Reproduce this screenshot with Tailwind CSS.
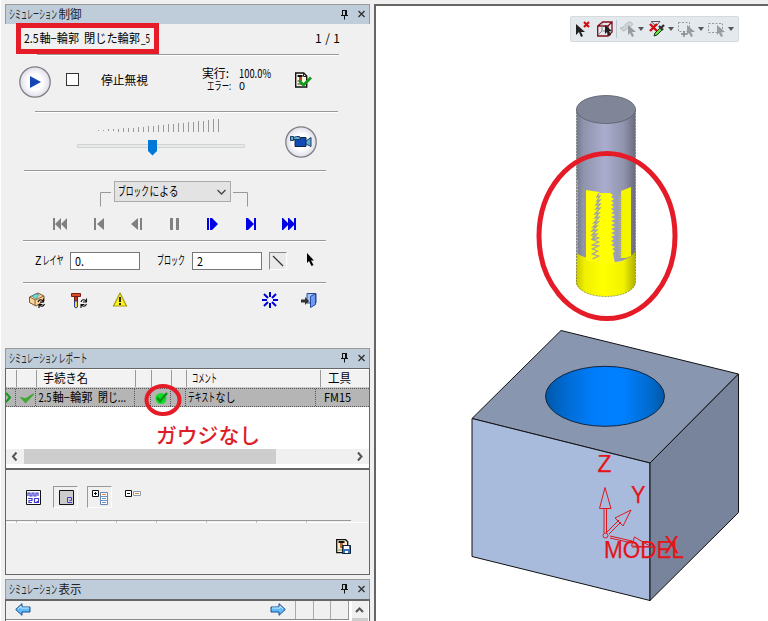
<!DOCTYPE html>
<html lang="ja">
<head>
<meta charset="utf-8">
<title>シミュレーション</title>
<script src="https://cdn.jsdelivr.net/npm/@tailwindcss/browser@4"></script>
</head>
<body class="relative flex h-[621px] w-[768px] overflow-hidden bg-[#f0f0f0] font-['Noto_Sans_CJK_JP','Liberation_Sans',sans-serif] text-[12px] text-black [&_svg]:block [&_svg]:shrink-0 [&_svg]:overflow-visible">

<!-- Left docked panels -->
<aside class="flex h-full w-[374px] shrink-0 flex-col border-l border-white pl-[4px] pt-[4px]">

  <!-- Simulation control -->
  <section class="flex h-[344px] w-[365px] shrink-0 flex-col">
    <header class="flex h-[20px] shrink-0 items-start border border-b-0 border-[#999] bg-[#bfccda] pl-[3px]">
      <svg width="74" height="19" fill="#222"><text y="14" textLength="48" lengthAdjust="spacingAndGlyphs">シミュレーション</text><text x="49.500" y="14" textLength="23" lengthAdjust="spacingAndGlyphs">制御</text></svg>
      <svg class="ml-auto mr-px" width="30" height="19"><path d="M4.500 5v5M3 10.500h7M6.500 11v3.500M4 5.500h5" stroke="#111" fill="none"/><path d="M8 5v5" stroke="#111" stroke-width="2"/><path d="M20.500 6l6 6M26.500 6l-6 6" stroke="#333" stroke-width="1.400"/></svg>
    </header>
    <div class="flex h-[30px] shrink-0 items-start pl-[19px]">
      <svg width="126" height="30"><text y="19" textLength="14.500" lengthAdjust="spacingAndGlyphs">2.5</text><text x="15.500" y="19" textLength="39.500" lengthAdjust="spacingAndGlyphs">軸−輪郭</text><text x="60" y="19" textLength="56" lengthAdjust="spacingAndGlyphs">閉じた輪郭</text><text x="117" y="19" textLength="9" lengthAdjust="spacingAndGlyphs">_5</text></svg>
      <svg class="ml-[165px]" width="26" height="30"><text y="19" textLength="25" lengthAdjust="spacing">1 / 1</text></svg>
    </div>
    <div class="ml-[32px] h-px w-[302px] shrink-0 bg-[#999] shadow-[0_1px_0_#fff]"></div>
    <div class="flex h-[56px] shrink-0 items-start pl-[14px]">
      <svg class="mt-[11px]" width="32" height="32"><defs><radialGradient id="disc"><stop offset=".5" stop-color="#fff"/><stop offset="1" stop-color="#dddde8"/></radialGradient></defs><circle cx="16" cy="16" r="15.200" fill="url(#disc)" stroke="#827d85" stroke-width="1.300"/><path d="M11 10v12l11-6z" fill="#1746b4"/></svg>
      <span class="ml-[15px] mt-[18px] size-[13px] border border-[#333] bg-white"></span>
      <svg class="ml-[22px]" width="48" height="50"><text y="29.500" textLength="47" lengthAdjust="spacingAndGlyphs">停止無視</text></svg>
      <svg class="ml-[53px]" width="72" height="50"><text y="23" textLength="27" lengthAdjust="spacingAndGlyphs">実行:</text><text x="37" y="23" textLength="32" lengthAdjust="spacingAndGlyphs">100.0%</text><text x="5" y="35" font-size="11" textLength="24" lengthAdjust="spacingAndGlyphs">エラー:</text><text x="37" y="35" font-size="11" textLength="6" lengthAdjust="spacingAndGlyphs">0</text></svg>
      <svg class="ml-[21px] mt-[17px]" width="17" height="17"><path d="M.7 1h8l3 3v11H.7z" fill="#fffbe8" stroke="#111" stroke-width="1.400"/><path d="M8.500 1v3.500h3M2.500 9h3M2.500 12h5" stroke="#222" fill="none"/><path d="M2.500 3h5v2h-5z" fill="#111"/><path d="M4 5h3v4H4z" fill="#b94b16"/><path d="M4.500 9l4 4 7.500-7.500" stroke="#12991c" stroke-width="2.800" fill="none"/></svg>
    </div>
    <div class="ml-[30px] h-px w-[303px] shrink-0 bg-[#999] shadow-[0_1px_0_#fff]"></div>
    <div class="flex h-[58px] shrink-0 items-start pl-[72px]">
      <svg width="168" height="50"><path d="M21.500 18v1M26.500 18v1M31.500 17v2M36.500 17v2M41.500 17v3M46.500 16v4M51.500 16v4M56.500 16v4M61.500 15v5M66.500 15v5M71.500 14v6M76.500 14v6M81.500 13v7M86.500 13v7M91.500 12v8M96.500 12v8M101.500 11v9M106.500 11v9M111.500 10v10M116.500 10v10M121.500 9v11M126.500 9v11M131.500 8v12M136.500 7v13M141.500 7v13" stroke="#999"/><path d="M.5 32.500h167v3H.5z" fill="#e7eaea" stroke="#d2d2d2"/><path d="M71 28h9v11l-4.500 4.500-4.500-4.500z" fill="#0078d7"/></svg>
      <svg class="ml-[40px] mt-[14px]" width="32" height="32"><circle cx="16" cy="16" r="15.200" fill="url(#disc)" stroke="#827d85" stroke-width="1.300"/><path d="M10 11.500h11v9H10z" fill="#104bb5" stroke="#12264d"/><path d="M5.500 10.500h3v4h-3zM8.500 11.500l3-1h3l1 3h-7zM21 15l5-3.500v9L21 18z" fill="#61a9cf" stroke="#183d61"/></svg>
    </div>
    <div class="ml-[19px] h-px w-[302px] shrink-0 bg-[#999] shadow-[0_1px_0_#fff]"></div>
    <div class="flex h-[40px] shrink-0 items-start pl-[95px]">
      <svg width="11" height="38"><path d="M.5 35.500v-14H11" stroke="#999" fill="none"/></svg>
      <div class="ml-[3px] mt-[10px] flex h-[21px] w-[117px] border border-[#aaa] bg-[#e3e3e3] pl-[3px]"><svg width="112" height="18"><text y="14" textLength="31" lengthAdjust="spacingAndGlyphs">ブロック</text><text x="31.500" y="14" textLength="29" lengthAdjust="spacingAndGlyphs">による</text><path d="M99.500 8l4 4 4-4" fill="none" stroke="#444" stroke-width="1.300"/></svg></div>
      <svg class="ml-[2px]" width="16" height="38"><path d="M0 21.500h14.500v14" stroke="#999" fill="none"/></svg>
    </div>
    <div class="flex h-[29px] shrink-0 items-start pl-[47px] pt-[7px]">
      <svg width="16" height="12" fill="#808080"><path d="M1 0h2v12H1zM9 0v12L3 6zM15 0v12L9 6z"/></svg>
      <svg class="ml-[26px]" width="11" height="12" fill="#808080"><path d="M0 0h2v12H0zM10 0v12L3 6z"/></svg>
      <svg class="ml-[26px]" width="12" height="12" fill="#808080"><path d="M7 0v12L0 6zM9 0h2v12H9z"/></svg>
      <svg class="ml-[27px]" width="10" height="12" fill="#808080"><path d="M0 0h3v12H0zM6 0h3v12H6z"/></svg>
      <svg class="ml-[27px]" width="12" height="12" fill="#0000e6"><path d="M0 0h2v12H0zM3 0h2l6 6-6 6H3z"/></svg>
      <svg class="ml-[27px]" width="11" height="12" fill="#0000e6"><path d="M0 0h2l6 6-6 6H0zM8 0h2v12H8z"/></svg>
      <svg class="ml-[25px]" width="15" height="12" fill="#0000e6"><path d="M0 0h1l6 6-6 6H0zM6 0h1l6 6-6 6H6zM12 0h2v12h-2z"/></svg>
    </div>
    <div class="ml-[18px] h-px w-[303px] shrink-0 bg-[#999] shadow-[0_1px_0_#fff]"></div>
    <div class="flex h-[41px] shrink-0 items-start pl-[30px]">
      <svg width="30" height="38"><text y="23.500" textLength="6.500" lengthAdjust="spacingAndGlyphs">Z</text><text x="7.500" y="23.500" textLength="21" lengthAdjust="spacingAndGlyphs">レイヤ</text></svg>
      <div class="ml-[5px] mt-[11px] flex h-[18px] w-[70px] border border-[#777] bg-white pl-[4px]"><svg width="20" height="16"><text y="13" textLength="9" lengthAdjust="spacingAndGlyphs">0.</text></svg></div>
      <svg class="ml-[17px]" width="29" height="38"><text y="23.500" textLength="28" lengthAdjust="spacingAndGlyphs">ブロック</text></svg>
      <div class="ml-[6px] mt-[11px] flex h-[18px] w-[70px] border border-[#777] bg-white pl-[4px]"><svg width="20" height="16"><text y="13" textLength="6" lengthAdjust="spacingAndGlyphs">2</text></svg></div>
      <span class="ml-[7px] mt-[11px] h-[18px] w-[18px] border border-b-white border-l-[#888] border-r-white border-t-[#888] bg-[#eaeaea]"><svg width="16" height="16"><path d="M3 3l10 10" stroke="#333" stroke-width="1.300"/></svg></span>
      <svg class="ml-[20px] mt-[12px]" width="8" height="15"><path d="M0 0v10l2-2 2.500 5 2-1-2.500-4.500h3z"/></svg>
    </div>
    <div class="ml-[18px] h-px w-[303px] shrink-0 bg-[#999] shadow-[0_1px_0_#fff]"></div>
    <div class="flex h-[36px] shrink-0 items-start pl-[24px] pt-[9px]">
      <svg width="17" height="17"><path d="M.5 5L9 1l6 3v5l-8 5-6.500-3.500z" fill="#fbd49c" stroke="#76572f"/><path d="M1 5l5 3 9-4M6 8v6" stroke="#8a663b" fill="none"/><path d="M3 4l4-2 3 1-3 4z" fill="#70dce5" stroke="#347986" stroke-width=".6"/><path d="M9 10c1-2.500 3-3 5-1M14.500 6.500V10H11M15.500 12c-1 2.500-3 3-5 1M10 16v-3.500h3.500" fill="none" stroke="#111" stroke-width="1.200"/></svg>
      <svg class="ml-[25px] mt-px" width="17" height="17"><path d="M.5.500h9v3h-9z" fill="#dc4b2a" stroke="#782010"/><path d="M3.500 3.500h3v6h-3z" fill="#c33820" stroke="#651b12"/><path d="M3.500 8h3v6l-1.500 1-1.500-1z" fill="#f1d72d" stroke="#273e9d"/><path d="M10 9c1-2.500 3-3 5-1M15.500 5.500V9H12M15.500 11c-1 2.500-3 3-5 1M10 15v-3.500h3.500" fill="none" stroke="#111" stroke-width="1.100"/></svg>
      <svg class="ml-[25px]" width="15" height="16"><path d="M7 1l6.500 13H.5z" fill="#fff416" stroke="#a79a1b" stroke-width="1.200"/><path d="M7 5v5M7 11v2" stroke="#111" stroke-width="1.800"/></svg>
      <svg class="ml-[134px]" width="16" height="16"><path d="M8 0v5M8 11v5M0 8h5M11 8h5M2 2l4 4M10 10l4 4M14 2l-4 4M6 10l-4 4" stroke="#0000d8" stroke-width="2"/></svg>
      <svg class="ml-[23px]" width="17" height="17"><path d="M6 1.500h9V11H6z" fill="#a3c5f5" stroke="#294c9a"/><path d="M9.500 4.500l5-3v11l-5 3z" fill="#719bf0" stroke="#294c9a"/><path d="M0 7.500h4V5l4 4-4 4v-2.500H0z" fill="#333"/></svg>
    </div>
  </section>

  <!-- Simulation report -->
  <section class="flex h-[122px] w-[365px] shrink-0 flex-col">
    <header class="flex h-[20px] shrink-0 items-start border border-b-0 border-[#999] bg-[#bfccda] pl-[3px]">
      <svg width="80" height="19" fill="#222"><text y="13.500" textLength="48" lengthAdjust="spacingAndGlyphs">シミュレーション</text><text x="49.500" y="13.500" textLength="29" lengthAdjust="spacingAndGlyphs">レポート</text></svg>
      <svg class="ml-auto mr-px" width="30" height="19"><path d="M4.500 4v5M3 9.500h7M6.500 10v3.500M4 4.500h5" stroke="#111" fill="none"/><path d="M8 4v5" stroke="#111" stroke-width="2"/><path d="M20.500 6l6 6M26.500 6l-6 6" stroke="#333" stroke-width="1.400"/></svg>
    </header>
    <div class="flex grow flex-col border-2 border-x border-t border-[#666] bg-white pt-px">
      <div class="grid h-[18px] shrink-0 grid-cols-[11px_20px_100px_15px_20px_15px_135px_1fr] divide-x divide-[#999] border-b border-b-[#ccc] bg-[#f2f2f2]">
        <span></span><span></span>
        <svg class="pl-[6px]" width="99" height="17"><text y="12.500" textLength="45" lengthAdjust="spacingAndGlyphs">手続き名</text></svg>
        <span></span><span></span><span></span>
        <svg class="pl-[5px]" width="134" height="17"><text y="12.500" textLength="25" lengthAdjust="spacingAndGlyphs">コメント</text></svg>
        <svg class="pl-[6px]" width="40" height="17"><text y="12.500" textLength="23" lengthAdjust="spacingAndGlyphs">工具</text></svg>
      </div>
      <div class="grid h-[19px] shrink-0 grid-cols-[11px_20px_99px_15px_20px_15px_136px_1fr] divide-x divide-dotted divide-[#555] border-y border-dotted border-[#555] bg-[#b5b5b5]">
        <svg width="10" height="17"><path d="M0 4l4 4.500L0 13" fill="none" stroke="#16991f" stroke-width="2"/></svg>
        <svg width="19" height="17"><path d="M4.500 9l4 4.500L16.500 5l-8 5z" fill="#43a735" stroke="#43a735" stroke-width="1.300"/></svg>
        <svg width="98" height="17"><text x="1.500" y="12.500" textLength="13" lengthAdjust="spacingAndGlyphs">2.5</text><text x="15.500" y="12.500" textLength="40" lengthAdjust="spacingAndGlyphs">軸−輪郭</text><text x="61" y="12.500" textLength="28" lengthAdjust="spacingAndGlyphs">閉じ...</text></svg>
        <span></span>
        <svg width="20" height="17"><ellipse cx="10" cy="9.500" rx="5.500" ry="5.500" fill="#14dc25"/><path d="M6 8.500l3 3.500 7-8" fill="none" stroke="#079519" stroke-width="2.500"/></svg>
        <span></span>
        <svg width="130" height="17"><text x="2" y="12.500" textLength="27" lengthAdjust="spacingAndGlyphs">テキスト</text><text x="29.500" y="12.500" textLength="20" lengthAdjust="spacingAndGlyphs">なし</text></svg>
        <svg width="40" height="17"><text x="2" y="12.500" textLength="27" lengthAdjust="spacingAndGlyphs">FM15</text></svg>
      </div>
      <div class="h-[42px] shrink-0"></div>
      <div class="flex h-[15px] shrink-0 bg-[#f0f0f0]">
        <svg width="18" height="15"><path d="M10.500 3.500l-3.500 4 3.500 4" fill="none" stroke="#555" stroke-width="2"/></svg>
        <div class="h-[15px] w-[252px] bg-[#cdcdcd]"></div>
        <svg class="ml-auto" width="17" height="15"><path d="M6 3.500l3.500 4-3.500 4" fill="none" stroke="#555" stroke-width="2"/></svg>
      </div>
    </div>
  </section>
  <div class="flex h-[105px] w-[365px] shrink-0 flex-col border border-t-0 border-[#666]">
    <div class="flex h-[50px] shrink-0 items-start pl-[20px] pt-[16px]">
      <svg class="mt-[4px]" width="15" height="15"><path d="M.5 .5h14v14H.5z" fill="#fff" stroke="#111"/><path d="M2 6V3h2v3h2V3h2v3h2V3h2v3M2 8.500h4v2H3v2h3M13 12.500H8.500v-4h4v3h-2" fill="none" stroke="#463dce" stroke-width="1.200"/></svg>
      <span class="ml-[12px] flex h-[22px] w-[25px] border border-b-white border-l-[#999] border-r-white border-t-[#999] pl-[5px] pt-[3px]"><svg width="15" height="15"><path d="M.5 .5h14v14H.5z" fill="#ccc" stroke="#111"/><path d="M13 12.500H8.500v-5h4v3h-2" fill="none" stroke="#463dce"/></svg></span>
      <span class="ml-[9px] flex h-[22px] w-[25px] border border-b-white border-l-[#999] border-r-white border-t-[#999] pl-[4px] pt-[3px]"><svg width="17" height="15"><path d="M.5 .5h6v6h-6z" fill="#fff" stroke="#111"/><path d="M2 3.500h3M3.500 2v3" stroke="#111"/><path d="M8.500 2.500h7v12h-7z" fill="#fff" stroke="#6687ab"/><path d="M10 4.500h4" stroke="#e3812e"/><path d="M8.500 6.500h7M10 8.500h4M8.500 10.500h7M10 12.500h4" stroke="#6c91be"/></svg></span>
      <svg class="ml-[13px] mt-[4px]" width="17" height="8"><path d="M.5 .5h6v6h-6z" fill="#fff" stroke="#111"/><path d="M2 3.500h3" stroke="#111"/><path d="M8.500 1.500h7v4h-7z" fill="#fff" stroke="#8d9caf"/><path d="M10 3.500h4" stroke="#e3812e"/></svg>
    </div>
    <svg width="363" height="4"><path d="M0 .5h345" stroke="#999"/><path d="M0 2.500h362" stroke="#fff"/><path d="M10 2h1M30 2h1M70 2h1M110 2h1M150 2h1M200 2h1M250 2h1M300 2h1" stroke="#888"/></svg>
    <div class="flex justify-end pr-[17px] pt-[15px]">
      <svg width="16" height="16"><path d="M.7.700h9l2 2v11H.7z" fill="#faefcc" stroke="#111" stroke-width="1.300"/><path d="M2.500 2h6v2h-6z" fill="#111"/><path d="M4 4h3v5H4z" fill="#bd632d"/><path d="M2 11h4" stroke="#879257"/><path d="M6.500 6.500h8v8h-8z" fill="#3971bb" stroke="#10213d"/><path d="M8 7h5v3H8zM9 12h3v2H9z" fill="#fff"/></svg>
    </div>
  </div>

  <!-- Simulation display -->
  <section class="mt-[4px] flex h-[42px] w-[365px] shrink-0 flex-col">
    <header class="flex h-[20px] shrink-0 items-start border border-b-0 border-[#999] bg-[#bfccda] pl-[3px]">
      <svg width="74" height="19" fill="#222"><text y="14" textLength="48" lengthAdjust="spacingAndGlyphs">シミュレーション</text><text x="49.500" y="14" textLength="23" lengthAdjust="spacingAndGlyphs">表示</text></svg>
      <svg class="ml-auto mr-px" width="30" height="19"><path d="M4.500 4v5M3 9.500h7M6.500 10v3.500M4 4.500h5" stroke="#111" fill="none"/><path d="M8 4v5" stroke="#111" stroke-width="2"/><path d="M20.500 6l6 6M26.500 6l-6 6" stroke="#333" stroke-width="1.400"/></svg>
    </header>
    <div class="flex grow items-start border-x border-t-2 border-[#666] bg-white">
      <div class="flex h-[19px] w-[343px] border-b border-r border-b-[#888] border-r-[#999] bg-[#f0f0f0] pl-[9px]">
        <svg class="mt-[2px]" width="16" height="13"><path d="M.7 6.500L7 .7V4h8v5H7v3.300z" fill="#62baf8" stroke="#174c8e"/><path d="M3 6l3-3v2h8" stroke="#c2edff" fill="none"/></svg>
        <svg class="ml-[240px] mt-[2px]" width="16" height="13"><path d="M14.300 6.500L8 .7V4H0v5h8v3.300z" fill="#62baf8" stroke="#174c8e"/><path d="M1 5h8V3l3 3" stroke="#c2edff" fill="none"/></svg>
        <span class="ml-[8px] h-full w-[18px] border-l border-[#aaa]"></span><span class="h-full w-[18px] border-l border-[#aaa]"></span><span class="h-full w-[18px] border-l border-[#aaa]"></span>
      </div>
      <div class="ml-[3px] h-[22px] w-[16px] bg-[#f0f0f0]"><svg width="16" height="22"><path d="M4 11l3.500-3.500L11 11" fill="none" stroke="#555" stroke-width="2"/><path d="M0 17h16v5H0z" fill="#cdcdcd"/></svg></div>
    </div>
  </section>
</aside>

<!-- Model viewport -->
<main class="flex h-full w-[394px] shrink-0 flex-col pt-[4px]">
  <div class="relative h-[617px] border-l-2 border-t-2 border-[#666] bg-white">
    <svg class="absolute -left-[2px] -top-[2px]" width="394" height="617" viewBox="374 4 394 617">
      <defs>
        <linearGradient id="steel"><stop stop-color="#777b91"/><stop offset=".12" stop-color="#8f93ac"/><stop offset=".48" stop-color="#aaadcd"/><stop offset=".8" stop-color="#9194ad"/><stop offset="1" stop-color="#696c7e"/></linearGradient>
        <linearGradient id="cut"><stop stop-color="#c9c900"/><stop offset=".15" stop-color="#f0f000"/><stop offset=".45" stop-color="#ff0"/><stop offset=".8" stop-color="#f2f200"/><stop offset="1" stop-color="#b0b000"/></linearGradient>
        <linearGradient id="bore"><stop stop-color="#0057a8"/><stop offset=".15" stop-color="#0069ce"/><stop offset=".4" stop-color="#007dfb"/><stop offset=".65" stop-color="#0080ff"/><stop offset=".9" stop-color="#0068c9"/><stop offset="1" stop-color="#0056a5"/></linearGradient>
      </defs>
      <!-- Tool -->
      <path d="M576.500 109v148c8 7 51 7 59 0V109z" fill="url(#steel)"/>
      <path d="M576.500 253q5 4 17 6l6 2 2-2 5 3h12q13-4 17-11v32c-4 18-55 18-59.500 0z" fill="url(#cut)"/>
      <path d="M586 190l13 2 1 1 10 0 3 2-2 2 3 2-3 2 3 2-3 2 3 2-3 2 3 2-3 2 4 2-4 2 4 2-4 2 4 2-4 2 4 2-4 2 4 2-4 2 4 2-4 2 3 2-3 2 3 2-3 2 4 2-3 2 3 2-2 2 2 11H599v-4l-6 2-7-2z" fill="#ff0"/>
      <path d="M621 191l10-4v69l-5 2h-5z" fill="#f5f500"/>
      <path d="M599 193l-2 4 3-1-3 5 3-1-4 5 4-1-4 5 4-1-5 6 4-1-4 5 4-1-5 6 4-1-5 5 4-1-5 5 5-1-5 5 5-1-5 5h5M592.500 236l6 2-5 2 5 2-6 3 6 1-6 3 5 2-5 3 6 2-6 3" fill="none" stroke="#9da0ae" stroke-width="1.300"/>
      <path d="M620 195v63" stroke="#b8b86a" stroke-width="3" stroke-dasharray="1 1"/><path d="M583 188v62" stroke="#a8a85d" stroke-dasharray="2 3"/><path d="M577.500 180v77" stroke="#b7b53d" stroke-dasharray="3 1"/>
      <ellipse cx="606" cy="109.500" rx="29.500" ry="14" fill="#818598" stroke="#5a5d6b" stroke-width=".8"/>
      <path d="M576.500 109v174c4 18 55 18 59 0V109" fill="none" stroke="#666955" stroke-width=".6" stroke-dasharray="2 1"/>
      <!-- Block -->
      <path d="M561 330.500L738.500 374 650 463 472 418.500z" fill="#8996b0" stroke="#111"/>
      <path d="M472 418.500L650 463v137.500L472 556.500z" fill="#a9bbdd" stroke="#111"/>
      <path d="M650 463l88.500-89v138.500L650 600.500z" fill="#78849b" stroke="#111"/>
      <ellipse cx="605" cy="396.300" rx="59.500" ry="30" fill="url(#bore)" stroke="#13263c"/>
      <!-- Axis marker -->
      <g fill="none" stroke="#da1820"><path d="M604 533v-25M606.500 533v-25M599.500 508.500l5.500-21 6 21zM607 532l12-12M609 534l12-12M615 518l16-8-8 16zM610 536l22 5M610 538l22 5M634.500 537l17 10-20-1zM632 547h24"/><circle cx="605.500" cy="535.500" r="2.500"/></g>
      <g fill="#e3151b" stroke="#e3151b" stroke-width=".25" font-family="Liberation Sans,sans-serif" font-size="24"><text x="597.500" y="472" textLength="14" lengthAdjust="spacingAndGlyphs">Z</text><text x="631" y="503" textLength="14.500" lengthAdjust="spacingAndGlyphs">Y</text><text x="664.500" y="553" textLength="14.500" lengthAdjust="spacingAndGlyphs">X</text><text x="604" y="558" textLength="80" lengthAdjust="spacingAndGlyphs">MODEL</text></g>
    </svg>
    <!-- Floating selection toolbar -->
    <div class="absolute left-[194px] top-[10px] flex h-[26px] w-[169px] items-center rounded-xs border border-[#d4dadd] bg-[#e3e9ed] pl-[5px]">
      <svg width="16" height="18"><path d="M0 4v11l3-3 2 5 2-1-2-4h4z" fill="#222"/><path d="M8 2l5 5M13 2l-5 5" stroke="#d10d12" stroke-width="2.200"/></svg>
      <svg class="ml-[5px]" width="16" height="18"><path d="M.7 6l5-4H15v10l-4 4H.7zM.7 6H11v10M11 6l4-4" fill="none" stroke="#850c19" stroke-width="1.300"/><path d="M5 3v8l-4 4M6 11h8" stroke="#888" fill="none"/><path d="M8 5v9l2-2 2 4 2-1-2-4h3z" fill="#222"/></svg>
      <span class="ml-[3px] h-[18px] w-px bg-[#bfc6cb]"></span>
      <svg class="ml-[2px]" width="26" height="18"><path d="M1 8c3 0 4-2 6-4s4-3 6-1-1 3-3 4-3 4-6 4z" fill="#cfd3d6" stroke="#b5babe"/><path d="M9 5v10l2-2 2 4 2-1-2-4h4z" fill="#969ca0"/><path d="M19 7h6l-3 4z" fill="#555"/></svg>
      <svg class="ml-[4px]" width="27" height="18"><path d="M2 1.500h9L7 6z" fill="none" stroke="#555"/><path d="M1 4l7 7M8 4l-7 7" stroke="#d10d12" stroke-width="2.400"/><path d="M5 16l1-3 5-5 2 2-5 5z" fill="#68df49" stroke="#163814"/><path d="M10 6l4 4M12 8l3-3" stroke="#333" stroke-width="2.400"/><path d="M19 7h6l-3 4z" fill="#555"/></svg>
      <svg class="ml-[3px]" width="27" height="18"><path d="M-.5 2.500h11v9h-11z" fill="none" stroke="#92999e" stroke-dasharray="2 1.500"/><path d="M8 5v10l2-2 2 4 2-1-2-4h4z" fill="#969ca0"/><path d="M2 14h6M5 11v6" stroke="#82898e" stroke-width="1.500"/><path d="M19 7h6l-3 4z" fill="#555"/></svg>
      <svg class="ml-[3px]" width="27" height="18"><path d="M-.5 3.500h14v9h-14z" fill="none" stroke="#92999e" stroke-dasharray="2 1.500"/><path d="M8 5v10l2-2 2 4 2-1-2-4h4z" fill="#969ca0"/><path d="M19 7h6l-3 4z" fill="#555"/></svg>
    </div>
  </div>
</main>

<!-- Annotations over the panels -->
<svg class="pointer-events-none absolute left-0 top-0" width="768" height="621">
  <g fill="none" stroke="#e51c28"><path d="M18.500 25.500h138v26h-138z" stroke-width="5"/><ellipse cx="163" cy="400" rx="16.500" ry="14" stroke-width="4"/><ellipse cx="607" cy="236" rx="68" ry="82.500" stroke-width="5"/></g>
  <text x="156" y="443" font-size="21" font-weight="500" fill="#de1d29" textLength="104" lengthAdjust="spacingAndGlyphs">ガウジなし</text>
</svg>
</body>
</html>
